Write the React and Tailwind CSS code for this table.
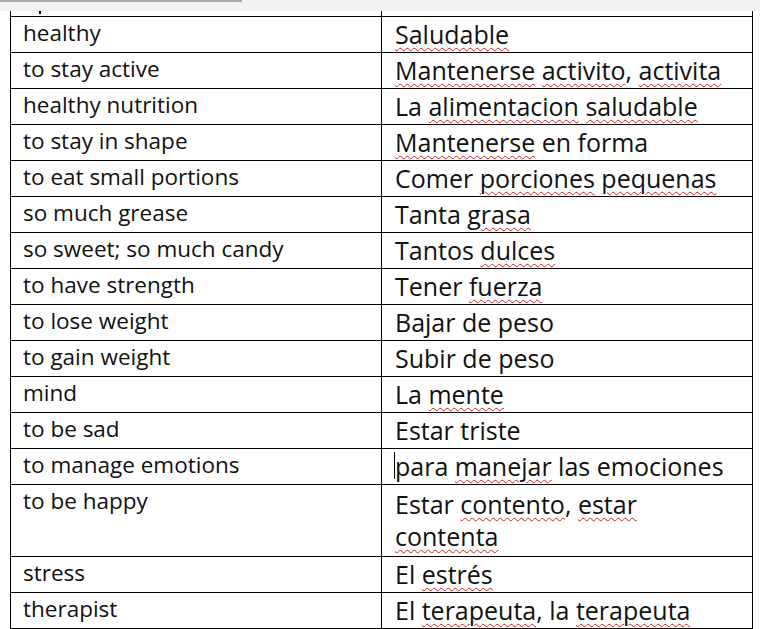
import React from "react";

const rows = [
  ["healthy", [["Saludable", true]]],
  ["to stay active", [["Mantenerse", true], " ", ["activito", true], ", ", ["activita", true]]],
  ["healthy nutrition", ["La ", ["alimentacion", true], " ", ["saludable", true]]],
  ["to stay in shape", [["Mantenerse", true], " en forma"]],
  ["to eat small portions", ["Comer ", ["porciones", true], " ", ["pequenas", true]]],
  ["so much grease", ["Tanta ", ["grasa", true]]],
  ["so sweet; so much candy", ["Tantos ", ["dulces", true]]],
  ["to have strength", ["Tener ", ["fuerza", true]]],
  ["to lose weight", ["Bajar de peso"]],
  ["to gain weight", ["Subir de peso"]],
  ["mind", ["La ", ["mente", true]]],
  ["to be sad", ["Estar triste"]],
  ["to manage emotions", ["para ", ["manejar", true], " las emociones"], "cursor"],
  ["to be happy", ["Estar ", ["contento", true], ", ", ["estar", true], " ", ["contenta", true]], "tall"],
  ["stress", ["El ", ["estrés", true]]],
  ["therapist", ["El ", ["terapeuta", true], ", la ", ["terapeuta", true]]],
];

function Words({ parts }) {
  return parts.map((p, i) =>
    typeof p === "string" ? (
      <span key={i}>{p}</span>
    ) : (
      <span
        key={i}
        className="underline decoration-wavy decoration-[#cc2424] decoration-[1.2px] underline-offset-[3px]"
      >
        {p[0]}
      </span>
    )
  );
}

export default function App() {
  return (
    <div
      className="w-[760px] h-[629px] bg-white overflow-hidden text-[#111]"
      style={{ fontFamily: "'Open Sans', 'Noto Sans', sans-serif" }}
    >
      <div className="h-[11px] bg-[#f2f2f1]">
        <div className="w-[242px] h-[2px] bg-[#a9a9a9]" />
      </div>

      <div className="ml-[10px] w-[743px]">
        {/* tail of the previous row */}
        <div className="grid grid-cols-[371px_372px] h-[5px] border-l border-r border-black">
          <div className="border-r border-black relative">
            <span className="absolute left-[28px] top-0 w-[2px] h-[3px] bg-black" />
          </div>
          <div />
        </div>

        {rows.map(([en, es, kind], i) => (
          <div
            key={i}
            className={`grid grid-cols-[371px_372px] border-t border-l border-r border-black ${
              kind === "tall" ? "h-[72px]" : "h-[36px]"
            } ${i === rows.length - 1 ? "border-b h-[37px]" : ""}`}
          >
            <div className="border-r border-black pl-[12px] pt-[3px] text-[22.5px] leading-[26px] whitespace-nowrap">
              {en}
            </div>
            <div
              className={`pl-[13px] pr-[24px] text-[25px] leading-[32px] ${
                kind === "tall" ? "pt-[3px]" : "pt-[1px]"
              }`}
            >
              <span className="relative">
                {kind === "cursor" && (
                  <span className="absolute -left-[1px] top-[3px] w-px h-[27px] bg-black" />
                )}
                <Words parts={es} />
              </span>
            </div>
          </div>
        ))}
      </div>
    </div>
  );
}
